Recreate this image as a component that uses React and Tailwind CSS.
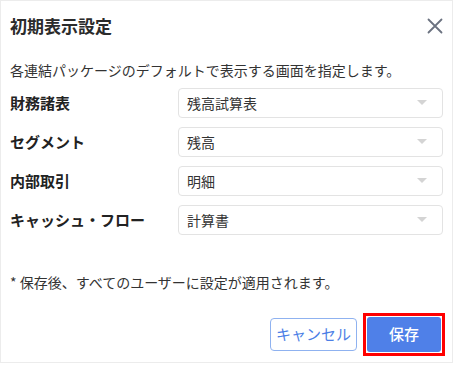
const rows = [
  { label: '財務諸表', value: '残高試算表' },
  { label: 'セグメント', value: '残高' },
  { label: '内部取引', value: '明細' },
  { label: 'キャッシュ・フロー', value: '計算書' },
];

const Caret = () => (
  <svg width="10" height="6" viewBox="0 0 10 6" className="shrink-0">
    <path d="M0 0 L10 0 L5 5 Z" fill="#d4d4d4" />
  </svg>
);

const SelectBox = ({ value }) => (
  <div className="flex items-center justify-between w-[265px] h-[30px] border border-[#e3e3e3] rounded-[4px] pl-[8px] pr-[15px] bg-white">
    <span className="text-[14px] text-[#333]">{value}</span>
    <Caret />
  </div>
);

const App = () => {
  return (
    <div className="w-[456px] h-[366px] bg-white font-['Noto_Sans_CJK_JP','Noto_Sans',sans-serif]">
      <div className="flex flex-col w-[453px] h-[363px] border border-[#ececec] bg-white">
        <div className="flex items-center justify-between pl-[9px] pr-[8px] pt-[13px]">
          <h2 className="text-[17px] leading-[24px] font-bold text-[#2b2b2b]">初期表示設定</h2>
          <svg width="16" height="16" viewBox="0 0 16 16" className="mr-[1px]">
            <path d="M1.5 1.5 L14.5 14.5 M14.5 1.5 L1.5 14.5" stroke="#6b7280" strokeWidth="1.8" strokeLinecap="round" />
          </svg>
        </div>

        <p className="mt-[22px] pl-[9px] text-[14px] leading-[20px] text-[#333]">
          各連結パッケージのデフォルトで表示する画面を指定します。
        </p>

        <div className="flex flex-col gap-[9px] mt-[8px] pl-[9px]">
          {rows.map((row) => (
            <div key={row.label} className="flex items-center">
              <div className="w-[168px] text-[15px] font-bold text-[#222]">{row.label}</div>
              <SelectBox value={row.value} />
            </div>
          ))}
        </div>

        <p className="mt-[37px] pl-[9px] text-[14px] leading-[20px] text-[#333]">
          * 保存後、すべてのユーザーに設定が適用されます。
        </p>

        <div className="flex items-center justify-end gap-[6px] mt-[21px] pr-[7px]">
          <button className="w-[87px] h-[33px] border border-[#8fb2f0] rounded-[4px] text-[15px] text-[#4d7fe6] bg-white">
            キャンセル
          </button>
          <div className="w-[82px] h-[43px] border-[3px] border-[#ff0000] p-px">
            <button className="w-full h-full rounded-[3px] bg-[#4f80e8] text-[15px] text-white font-medium">
              保存
            </button>
          </div>
        </div>
      </div>
    </div>
  );
};

export default App;
